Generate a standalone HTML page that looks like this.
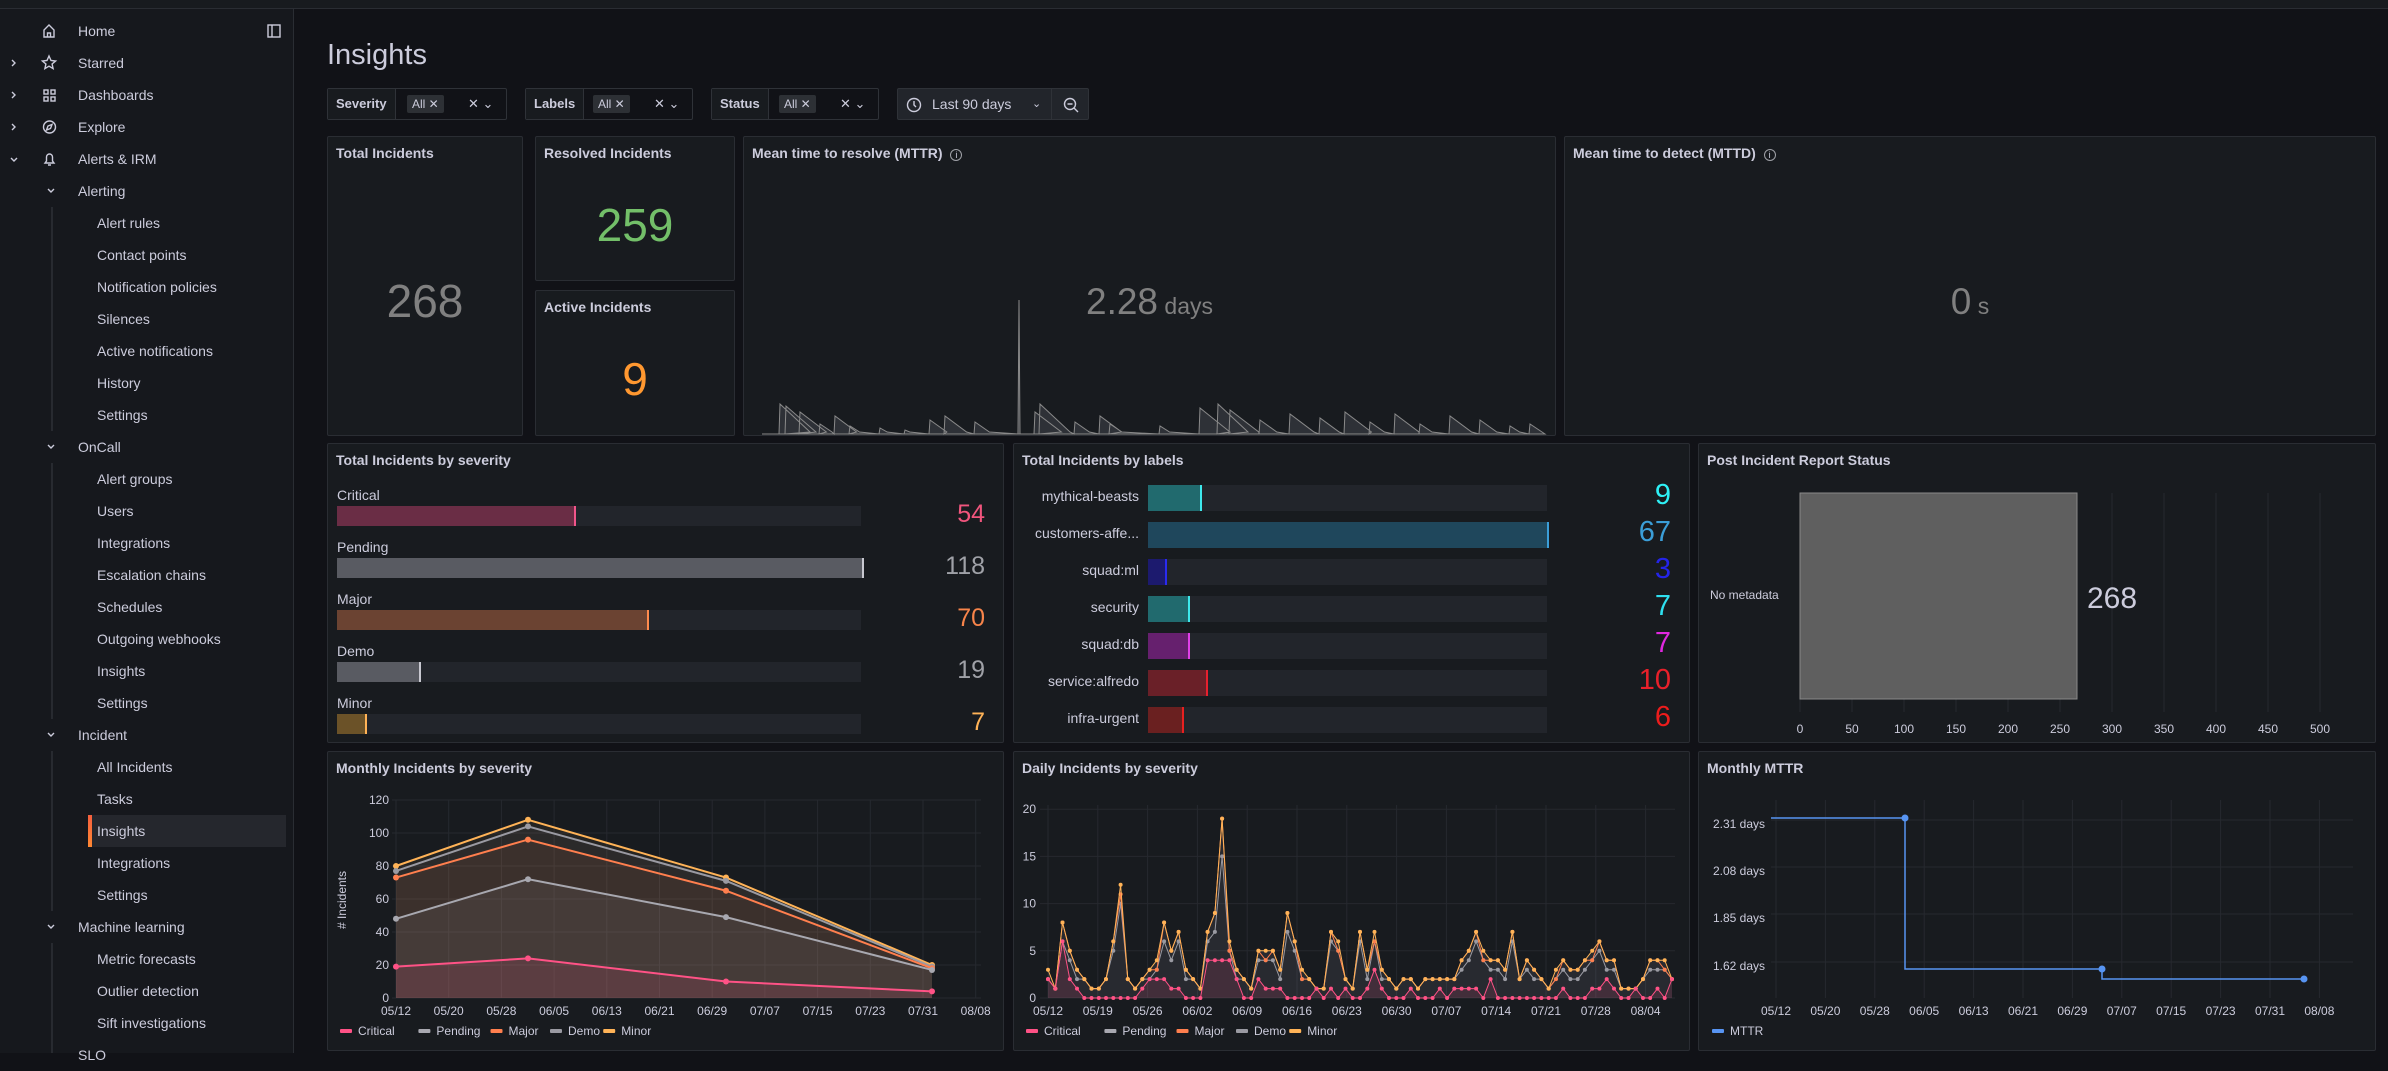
<!DOCTYPE html>
<html><head><meta charset="utf-8">
<style>
*{box-sizing:border-box;margin:0;padding:0}
body{width:2388px;height:1053px;background:#111217;font-family:"Liberation Sans",sans-serif;color:#ccccdc;overflow:hidden;position:relative;font-size:14px}
.a{position:absolute}
.side{left:0;top:9px;width:294px;height:1044px;background:#16181d;border-right:1px solid #2a2d33}
.top{left:0;top:0;width:2388px;height:9px;background:#181b1f;border-bottom:1px solid #2a2d33}
.ni{position:absolute;font-size:14px;color:#ccccdc;line-height:32px;height:32px;white-space:nowrap}
.panel{position:absolute;background:#181b1f;border:1px solid #2a2d33;border-radius:2px}
.pt{position:absolute;left:8px;top:8px;font-size:14px;font-weight:bold;color:#ccccdc}
.big{position:absolute;font-weight:500;text-align:center;width:100%}
.fl{position:absolute;top:88px;height:32px;border:1px solid #2f3238;border-radius:2px;background:#111217}
.fl .lab{position:absolute;left:0;top:0;height:30px;line-height:30px;padding:0 8px;background:#181b1f;border-right:1px solid #2f3238;font-size:13px;font-weight:bold}
.chip{position:absolute;top:6px;height:18px;line-height:18px;background:#2d3035;border-radius:2px;font-size:12px;padding:0 5px}
.xv{position:absolute;top:0;line-height:30px;font-size:13px;color:#ccccdc}
.lbl{position:absolute;font-size:14px;color:#ccccdc}
.bar{position:absolute;background:#22252b}
.val{position:absolute;font-size:25px;text-align:right}
.lrow{position:absolute;font-size:14px;text-align:right;width:130px}
</style></head><body>
<div class="a top"></div>
<div class="a side">
<svg class="a" style="left:0;top:-9px" width="294" height="1060" fill="none" stroke="#ccccdc" stroke-width="1.4">
<path d="M44 37v-7l5-5 5 5v7z M47.5 37v-4h3v4"/>
<path d="M49 56l2 4.5 4.6.5-3.5 3 1 4.6-4.1-2.4-4.1 2.4 1-4.6-3.5-3 4.6-.5z"/>
<rect x="44" y="90" width="4" height="4"/><rect x="51" y="90" width="4" height="4"/><rect x="44" y="97" width="4" height="4"/><rect x="51" y="97" width="4" height="4"/>
<circle cx="49.5" cy="127" r="6"/><path d="M52 124.5l-1.5 4-4 1.5 1.5-4z"/>
<path d="M45 163h9l-1.5-2v-4a3 3 0 0 0-6 0v4z M48 165h3"/>
<rect x="268" y="25" width="12" height="12"/><path d="M272 25v12"/>
<path d="M12 60l3 3-3 3 M12 92l3 3-3 3 M12 124l3 3-3 3 M11 158l3 3 3-3 M48 189l3 3 3-3 M48 445l3 3 3-3 M48 733l3 3 3-3 M48 925l3 3 3-3"/>
<path d="M52 207v224 M52 463v256 M52 751v160 M52 943v110" stroke="#2f3238"/>
</svg>
<div class="a" style="left:88px;top:806px;width:198px;height:32px;background:#25272d"></div>
<div class="a" style="left:88px;top:806px;width:4px;height:32px;background:linear-gradient(#f55f3e,#ff8833)"></div>
<div class="ni" style="left:78px;top:6px">Home</div>
<div class="ni" style="left:78px;top:38px">Starred</div>
<div class="ni" style="left:78px;top:70px">Dashboards</div>
<div class="ni" style="left:78px;top:102px">Explore</div>
<div class="ni" style="left:78px;top:134px">Alerts &amp; IRM</div>
<div class="ni" style="left:78px;top:166px">Alerting</div>
<div class="ni" style="left:97px;top:198px">Alert rules</div>
<div class="ni" style="left:97px;top:230px">Contact points</div>
<div class="ni" style="left:97px;top:262px">Notification policies</div>
<div class="ni" style="left:97px;top:294px">Silences</div>
<div class="ni" style="left:97px;top:326px">Active notifications</div>
<div class="ni" style="left:97px;top:358px">History</div>
<div class="ni" style="left:97px;top:390px">Settings</div>
<div class="ni" style="left:78px;top:422px">OnCall</div>
<div class="ni" style="left:97px;top:454px">Alert groups</div>
<div class="ni" style="left:97px;top:486px">Users</div>
<div class="ni" style="left:97px;top:518px">Integrations</div>
<div class="ni" style="left:97px;top:550px">Escalation chains</div>
<div class="ni" style="left:97px;top:582px">Schedules</div>
<div class="ni" style="left:97px;top:614px">Outgoing webhooks</div>
<div class="ni" style="left:97px;top:646px">Insights</div>
<div class="ni" style="left:97px;top:678px">Settings</div>
<div class="ni" style="left:78px;top:710px">Incident</div>
<div class="ni" style="left:97px;top:742px">All Incidents</div>
<div class="ni" style="left:97px;top:774px">Tasks</div>
<div class="ni" style="left:97px;top:806px">Insights</div>
<div class="ni" style="left:97px;top:838px">Integrations</div>
<div class="ni" style="left:97px;top:870px">Settings</div>
<div class="ni" style="left:78px;top:902px">Machine learning</div>
<div class="ni" style="left:97px;top:934px">Metric forecasts</div>
<div class="ni" style="left:97px;top:966px">Outlier detection</div>
<div class="ni" style="left:97px;top:998px">Sift investigations</div>
<div class="ni" style="left:78px;top:1030px">SLO</div>
</div>

<div class="a" style="left:327px;top:39px;font-size:29px;color:#ccccdc">Insights</div>

<div class="fl" style="left:327px;width:180px"><div class="lab">Severity</div><div class="chip" style="left:79px">All ✕</div><div class="xv" style="left:140px">✕ ⌄</div></div>
<div class="fl" style="left:525px;width:168px"><div class="lab">Labels</div><div class="chip" style="left:67px">All ✕</div><div class="xv" style="left:128px">✕ ⌄</div></div>
<div class="fl" style="left:711px;width:168px"><div class="lab">Status</div><div class="chip" style="left:67px">All ✕</div><div class="xv" style="left:128px">✕ ⌄</div></div>
<div class="fl" style="left:897px;width:192px;background:#22252b">
<svg class="a" style="left:8px;top:8px" width="16" height="16" fill="none" stroke="#ccccdc" stroke-width="1.4"><circle cx="8" cy="8" r="6.5"/><path d="M8 4v4l2 2"/></svg>
<div class="xv" style="left:34px;font-size:14px">Last 90 days</div><div class="xv" style="left:134px;font-size:11px">⌄</div>
<div class="a" style="left:153px;top:0;width:1px;height:30px;background:#2f3238"></div>
<svg class="a" style="left:164px;top:7px" width="18" height="18" fill="none" stroke="#ccccdc" stroke-width="1.4"><circle cx="8" cy="8" r="5.5"/><path d="M12 12l4 4 M5.5 8h5"/></svg>
</div>

<div class="panel" style="left:327px;top:136px;width:196px;height:300px"><div class="pt">Total Incidents</div><div class="big" style="top:137px;font-size:46px;color:#808080">268</div></div>
<div class="panel" style="left:535px;top:136px;width:200px;height:145px"><div class="pt">Resolved Incidents</div><div class="big" style="top:61px;font-size:46px;color:#73bf69">259</div></div>
<div class="panel" style="left:535px;top:290px;width:200px;height:146px"><div class="pt">Active Incidents</div><div class="big" style="top:61px;font-size:46px;color:#ff9830">9</div></div>
<div class="panel" style="left:743px;top:136px;width:813px;height:300px"><div class="pt">Mean time to resolve (MTTR) &nbsp;<span style="font-weight:normal;border:1px solid #9fa1a7;border-radius:50%;display:inline-block;width:12px;height:12px;line-height:11px;text-align:center;font-size:9px">i</span></div><div class="big" style="top:144px;font-size:37px;color:#808080">2.28<span style="font-size:23px"> days</span></div></div>
<div class="panel" style="left:1564px;top:136px;width:812px;height:300px"><div class="pt">Mean time to detect (MTTD) &nbsp;<span style="font-weight:normal;border:1px solid #9fa1a7;border-radius:50%;display:inline-block;width:12px;height:12px;line-height:11px;text-align:center;font-size:9px">i</span></div><div class="big" style="top:144px;font-size:37px;color:#808080">0<span style="font-size:23px"> s</span></div></div>

<div class="panel" style="left:327px;top:443px;width:677px;height:300px"><div class="pt">Total Incidents by severity</div></div>
<div class="panel" style="left:1013px;top:443px;width:677px;height:300px"><div class="pt">Total Incidents by labels</div></div>
<div class="panel" style="left:1698px;top:443px;width:678px;height:300px"><div class="pt">Post Incident Report Status</div></div>

<div class="panel" style="left:327px;top:751px;width:677px;height:300px"><div class="pt">Monthly Incidents by severity</div></div>
<div class="panel" style="left:1013px;top:751px;width:677px;height:300px"><div class="pt">Daily Incidents by severity</div></div>
<div class="panel" style="left:1698px;top:751px;width:678px;height:300px"><div class="pt">Monthly MTTR</div></div>

<div class="lbl" style="left:337px;top:487px">Critical</div>
<div class="bar" style="left:337px;top:506px;width:524px;height:20px"></div><div class="a" style="left:337px;top:506px;width:239px;height:20px;background:#6a2d45;border-right:2px solid #f2558a"></div>
<div class="val" style="left:900px;top:500px;width:85px;color:#f0557d">54</div>
<div class="lbl" style="left:337px;top:539px">Pending</div>
<div class="bar" style="left:337px;top:558px;width:524px;height:20px"></div><div class="a" style="left:337px;top:558px;width:527px;height:20px;background:#595b62;border-right:2px solid #c8c8d0"></div>
<div class="val" style="left:900px;top:552px;width:85px;color:#9fa1a7">118</div>
<div class="lbl" style="left:337px;top:591px">Major</div>
<div class="bar" style="left:337px;top:610px;width:524px;height:20px"></div><div class="a" style="left:337px;top:610px;width:312px;height:20px;background:#6b4332;border-right:2px solid #ff8b4e"></div>
<div class="val" style="left:900px;top:604px;width:85px;color:#f7844a">70</div>
<div class="lbl" style="left:337px;top:643px">Demo</div>
<div class="bar" style="left:337px;top:662px;width:524px;height:20px"></div><div class="a" style="left:337px;top:662px;width:84px;height:20px;background:#595b62;border-right:2px solid #c8c8d0"></div>
<div class="val" style="left:900px;top:656px;width:85px;color:#9fa1a7">19</div>
<div class="lbl" style="left:337px;top:695px">Minor</div>
<div class="bar" style="left:337px;top:714px;width:524px;height:20px"></div><div class="a" style="left:337px;top:714px;width:30px;height:20px;background:#6b5228;border-right:2px solid #ffb357"></div>
<div class="val" style="left:900px;top:708px;width:85px;color:#ffb357">7</div>

<div class="lrow" style="left:1009px;top:488px">mythical-beasts</div>
<div class="bar" style="left:1148px;top:485px;width:399px;height:26px"></div><div class="a" style="left:1148px;top:485px;width:54px;height:26px;background:#216a6e;border-right:2px solid #3ee8ec"></div>
<div class="val" style="left:1560px;top:479px;width:111px;font-size:29px;color:#2ef0f5">9</div>
<div class="lrow" style="left:1009px;top:525px">customers-affe...</div>
<div class="bar" style="left:1148px;top:522px;width:399px;height:26px"></div><div class="a" style="left:1148px;top:522px;width:401px;height:26px;background:#1f475c;border-right:2px solid #3b9ed8"></div>
<div class="val" style="left:1560px;top:516px;width:111px;font-size:29px;color:#3b9ed8">67</div>
<div class="lrow" style="left:1009px;top:562px">squad:ml</div>
<div class="bar" style="left:1148px;top:559px;width:399px;height:26px"></div><div class="a" style="left:1148px;top:559px;width:19px;height:26px;background:#1c1a6e;border-right:2px solid #2a2af0"></div>
<div class="val" style="left:1560px;top:553px;width:111px;font-size:29px;color:#2424e8">3</div>
<div class="lrow" style="left:1009px;top:599px">security</div>
<div class="bar" style="left:1148px;top:596px;width:399px;height:26px"></div><div class="a" style="left:1148px;top:596px;width:42px;height:26px;background:#216a6e;border-right:2px solid #3ee8ec"></div>
<div class="val" style="left:1560px;top:590px;width:111px;font-size:29px;color:#2ee0f0">7</div>
<div class="lrow" style="left:1009px;top:636px">squad:db</div>
<div class="bar" style="left:1148px;top:633px;width:399px;height:26px"></div><div class="a" style="left:1148px;top:633px;width:42px;height:26px;background:#66206e;border-right:2px solid #e040e8"></div>
<div class="val" style="left:1560px;top:627px;width:111px;font-size:29px;color:#e028e0">7</div>
<div class="lrow" style="left:1009px;top:673px">service:alfredo</div>
<div class="bar" style="left:1148px;top:670px;width:399px;height:26px"></div><div class="a" style="left:1148px;top:670px;width:60px;height:26px;background:#6a2028;border-right:2px solid #e8202e"></div>
<div class="val" style="left:1560px;top:664px;width:111px;font-size:29px;color:#e8202a">10</div>
<div class="lrow" style="left:1009px;top:710px">infra-urgent</div>
<div class="bar" style="left:1148px;top:707px;width:399px;height:26px"></div><div class="a" style="left:1148px;top:707px;width:36px;height:26px;background:#6a2020;border-right:2px solid #e82020"></div>
<div class="val" style="left:1560px;top:701px;width:111px;font-size:29px;color:#ec1c1c">6</div>

<svg class="a" id="ov" style="left:0;top:0" width="2388" height="1053" font-family="Liberation Sans, sans-serif" font-size="12" fill="#ccccdc"></svg>

<script>
(function(){
var S='';
function t(x,y,s,a,extra){S+='<text x="'+x+'" y="'+y+'" text-anchor="'+(a||'start')+'" '+(extra||'')+'>'+s+'</text>';}
function l(x1,y1,x2,y2,c,w){S+='<line x1="'+x1+'" y1="'+y1+'" x2="'+x2+'" y2="'+y2+'" stroke="'+(c||'#26292f')+'" stroke-width="'+(w||1)+'"/>';}
for(var i=0;i<=10;i++){var x=1800+52*i;l(x,493,x,712);t(x,733,i*50,'middle');}
S+='<rect x="1800" y="493" width="277" height="206" fill="#5f5f5f" stroke="#8a8a8a"/>';
t(1710,599,'No metadata','start','font-size="12"');
t(2087,608,'268','start','font-size="30"');
// MTTR sparkline: sparse decays
var base=434,bx=762,ex=1545;
var ev=[[780,30],[786,28],[800,22],[820,10],[835,18],[850,8],[880,6],[905,4],[930,14],[945,18],[975,12],[1019,134],[1035,22],[1040,30],[1075,12],[1100,18],[1110,10],[1160,8],[1200,26],[1218,30],[1230,24],[1260,14],[1290,20],[1320,16],[1345,22],[1370,12],[1395,20],[1420,10],[1450,18],[1480,14],[1510,8],[1530,10]];
var p=bx+','+base+' ';
ev.forEach(function(e){var x=e[0],h=e[1];p+=(x-1)+','+base+' '+x+','+(base-h)+' '+(x+ (h>100?1:Math.min(30,h*1.2)))+','+(base-(h>100?0:2))+' ';});
p+=ex+','+base;
S+='<polygon points="'+p+'" fill="rgba(204,204,220,0.13)" stroke="#8a8a8a" stroke-width="1"/>';
var X0=396,X1=976;
for(var i=0;i<=6;i++){var y=998-i*33;l(X0-4,y,X1+5,y);t(389,y+4,i*20,'end');}
var md=['05/12','05/20','05/28','06/05','06/13','06/21','06/29','07/07','07/15','07/23','07/31','08/08'];
for(var i=0;i<12;i++){var x=X0+i*52.7;l(x,800,x,998);t(x,1015,md[i],'middle');}
S+='<text x="346" y="900" transform="rotate(-90 346 900)" text-anchor="middle" font-size="12"># Incidents</text>';
var mx=[396,528,726,932];
function my(v){return 998-v*1.65;}
var ser=[['#ffb357',[80,108,73,20]],['#9a9aa2',[77,104,71,19]],['#ff7f4e',[73,96,65,18]],['#a8a8b0',[48,72,49,17]],['#ff5286',[19,24,10,4]]];
var fills=['rgba(255,179,87,0.06)','rgba(160,160,170,0.06)','rgba(255,127,78,0.08)','rgba(160,160,170,0.1)','rgba(255,82,134,0.12)'];
ser.forEach(function(s,k){var q=s[1].map(function(v,i){return mx[i]+','+my(v)}).join(' ');
S+='<polygon points="'+mx[0]+',998 '+q+' '+mx[3]+',998" fill="'+fills[k]+'"/>';});
ser.forEach(function(s){var q=s[1].map(function(v,i){return mx[i]+','+my(v)}).join(' ');
S+='<polyline points="'+q+'" fill="none" stroke="'+s[0]+'" stroke-width="2"/>';
s[1].forEach(function(v,i){S+='<circle cx="'+mx[i]+'" cy="'+my(v)+'" r="3" fill="'+s[0]+'"/>';});});
function legend(x,y,items){items.forEach(function(it){S+='<rect x="'+x+'" y="'+(y-6)+'" width="12" height="4" rx="1" fill="'+it[1]+'"/>';t(x+18,y,it[0]);x+=18+it[0].length*6.3+10;});}
var LG=[['Critical','#ff5286'],['Pending','#a8a8b0'],['Major','#ff7f4e'],['Demo','#9a9aa2'],['Minor','#ffb357']];
legend(340,1035,LG);
var D0=1048;
for(var i=0;i<=4;i++){var y=998-i*47.2;l(1040,y,1675,y);t(1036,y+4,i*5,'end');}
var dd=['05/12','05/19','05/26','06/02','06/09','06/16','06/23','06/30','07/07','07/14','07/21','07/28','08/04'];
for(var i=0;i<13;i++){var x=D0+i*49.8;l(x,805,x,998);t(x,1015,dd[i],'middle');}
var tp=[3,1,8,5,3,2,1,1,2,6,12,2,1,2,3,4,8,5,7,3,2,1,7,9,19,6,3,2,1,5,5,5,3,9,6,3,2,1,1,7,6,2,1,7,3,7,3,2,1,2,2,1,2,2,2,2,2,4,5,7,5,4,4,3,7,2,4,3,2,1,3,4,3,3,4,5,6,4,4,1,1,1,2,4,4,4,2];
var cr=[2,1,6,2,1,0,0,0,0,0,0,0,0,1,2,2,2,1,1,0,0,0,4,4,4,4,2,0,0,2,1,1,1,0,0,0,0,1,0,1,0,1,0,0,1,3,1,0,0,0,1,0,0,0,1,0,1,1,1,1,0,2,0,0,0,0,0,0,0,0,0,1,0,0,0,1,1,2,1,0,0,1,0,0,1,0,2];
var N=tp.length,DXe=(1672-D0)/(N-1);
function dy(v){return 998-v*9.44;}
function dpts(a){return a.map(function(v,i){return (D0+i*DXe).toFixed(1)+','+dy(v).toFixed(1)}).join(' ');}
var pen=tp.map(function(v,i){return Math.max(cr[i]||0,Math.round(v*0.8))});
var maj=tp.map(function(v,i){return Math.max(pen[i],v-(i%5==0?1:0))});
S+='<polygon points="'+D0+',998 '+dpts(tp)+' 1672,998" fill="rgba(160,160,170,0.12)"/>';
S+='<polygon points="'+D0+',998 '+dpts(cr)+' '+(D0+(cr.length-1)*DXe).toFixed(1)+',998" fill="rgba(255,82,134,0.12)"/>';
[[pen,'#9a9aa2'],[maj,'#ff7f4e'],[tp,'#ffb357'],[cr,'#ff5286']].forEach(function(s){
S+='<polyline points="'+dpts(s[0])+'" fill="none" stroke="'+s[1]+'" stroke-width="1"/>';
s[0].forEach(function(v,i){S+='<circle cx="'+(D0+i*DXe).toFixed(1)+'" cy="'+dy(v).toFixed(1)+'" r="2" fill="'+s[1]+'"/>';});});
legend(1026,1035,LG);
var yl=[[824,'2.31 days'],[871,'2.08 days'],[918,'1.85 days'],[966,'1.62 days']];
yl.forEach(function(a){l(1771,a[0]-4,2353,a[0]-4);t(1765,a[0]+4,a[1],'end');});
for(var i=0;i<12;i++){var x=1776+i*49.4;l(x,800,x,998);t(x,1015,md[i],'middle');}
S+='<polyline points="1771,818 1905,818 1905,969 2102,969 2102,979 2304,979" fill="none" stroke="#5794f2" stroke-width="1.5"/>';
[[1905,818],[2102,969],[2304,979]].forEach(function(p){S+='<circle cx="'+p[0]+'" cy="'+p[1]+'" r="3.5" fill="#5794f2"/>';});
legend(1712,1035,[['MTTR','#5794f2']]);
document.getElementById('ov').innerHTML=S;
})();
</script>
</body></html>
